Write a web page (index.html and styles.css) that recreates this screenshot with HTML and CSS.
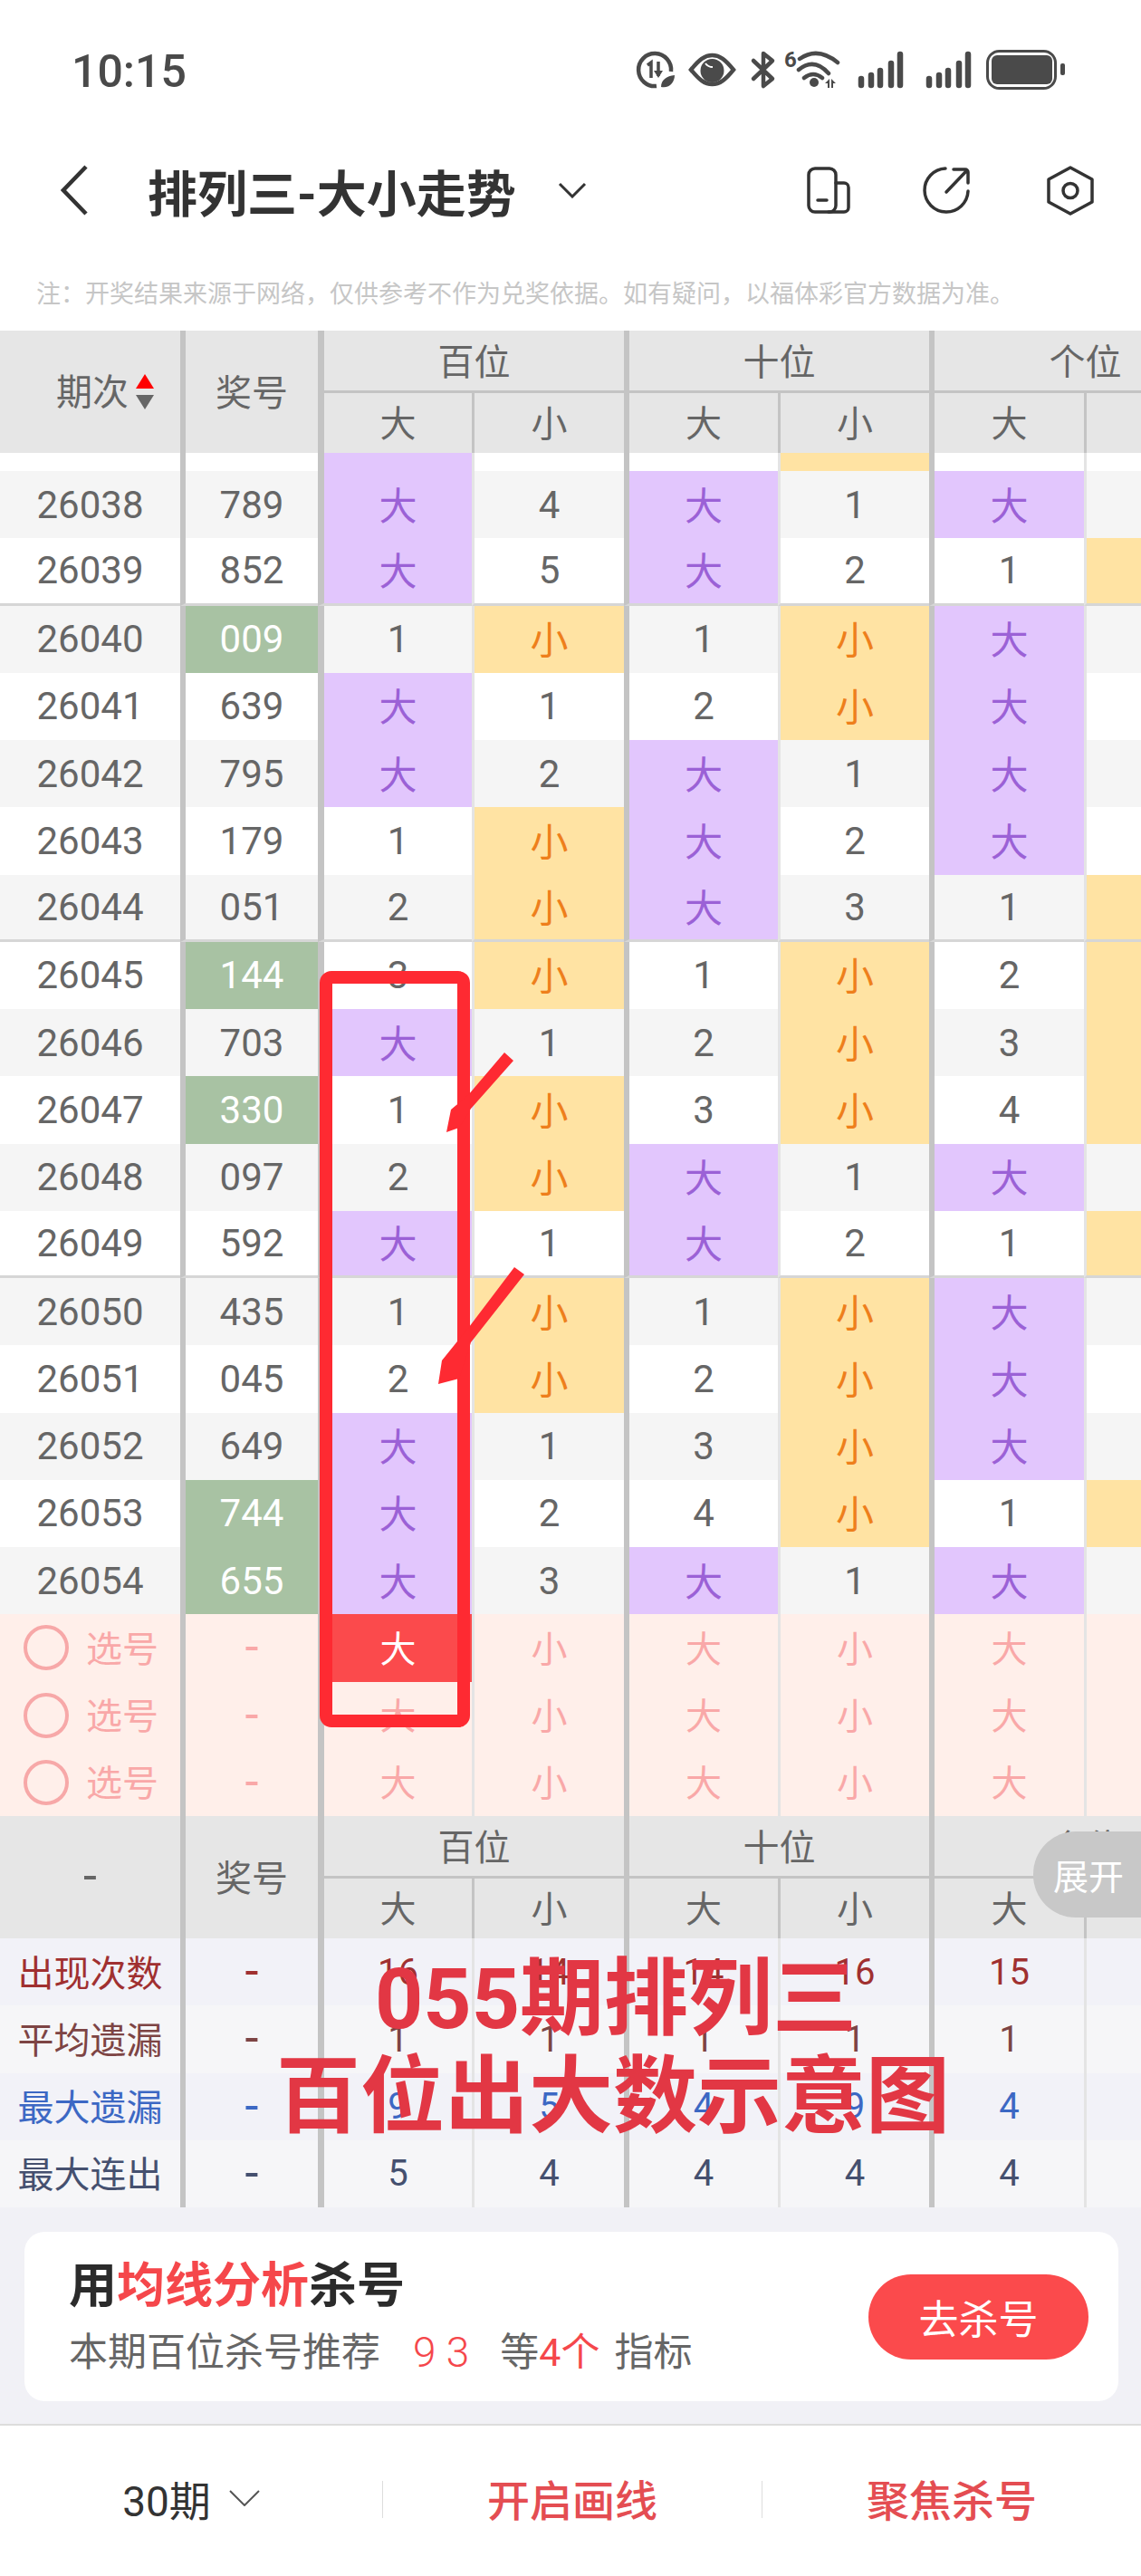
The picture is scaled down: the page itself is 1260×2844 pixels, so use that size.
FILE: index.html
```html
<!DOCTYPE html>
<html lang="zh-CN">
<head>
<meta charset="UTF-8">
<title>排列三-大小走势</title>
<link rel="stylesheet" href="styles.css">
</head>
<body>
<div class="page">

  <div class="status">
    <span class="time">10:15</span>
    <svg class="status-icons" width="480" height="50" viewBox="0 0 480 50">
      <g fill="none" stroke="#4a4a4a" stroke-width="4.5">
        <path d="M25 41A18 18 0 1 1 41 25"/>
        <path d="M15 18l4-3v17" stroke-width="3.5"/>
        <path d="M27 14v16" stroke-width="3.5"/>
        <path d="M63 23C72 12 78 7 86.5 7S101 12 110 23C101 34 95 39 86.5 39S72 34 63 23Z"/>
        <path d="M132 13L153 33L143 41V5L153 13L132 33" stroke-linejoin="round" stroke-linecap="round"/>
        <path d="M183 11Q203 -3 225 15M182 23Q199 9 215 27M188 32Q198 24 208 32" stroke-linecap="round"/>
      </g>
      <g fill="#4a4a4a">
        <path d="M22 24h10l-5 8z"/>
        <path d="M30 42C30 34 36 30 45 29C45 37 39 44 30 42Z"/>
        <circle cx="86.5" cy="24" r="13"/>
        <circle cx="199" cy="37" r="5"/>
        <path d="M211 38l5-5v10h-2v-5zM218 33l5 5h-3v5h-2z"/>
        <text x="166" y="20" class="wifi-num">6</text>
        <rect x="395" y="7" width="67" height="32" rx="6"/>
        <rect x="471" y="16" width="5" height="13" rx="2"/>
      </g>
      <path d="M79 16Q82 20 87 20" fill="none" stroke="#fff" stroke-width="2"/>
      <rect x="390.5" y="2.5" width="75" height="41" rx="13" fill="none" stroke="#4a4a4a" stroke-width="3"/>
      <path d="M251 33v7M262 29v11M272 24v16M284 16v24M294 6v34M326 33v7M337 29v11M347 24v16M359 16v24M369 6v34" stroke="#4a4a4a" stroke-width="6.5" stroke-linecap="round"/>
    </svg>
  </div>

  <div class="nav">
    <svg class="back" width="30" height="56" viewBox="0 0 30 56"><path d="M28 2L3 28L28 54" fill="none" stroke="#333" stroke-width="4.5"/></svg>
    <h1 class="title">排列三-大小走势</h1>
    <svg class="drop" width="32" height="18" viewBox="0 0 32 18"><path d="M2 2L16 16L30 2" fill="none" stroke="#333" stroke-width="3"/></svg>
    <div class="nav-icons">
      <svg width="60" height="60" viewBox="0 0 60 60" fill="none" stroke="#333" stroke-width="3.5" stroke-linecap="round">
        <rect x="6" y="6" width="30" height="48" rx="7"/>
        <path d="M36 22h9a5 5 0 0 1 5 5v22a5 5 0 0 1-5 5H28M16 41h10"/>
      </svg>
      <svg class="share" width="60" height="60" viewBox="0 0 60 60" fill="none" stroke="#333" stroke-width="3.5" stroke-linecap="round">
        <path d="M29 6A24 24 0 1 0 54 31"/>
        <path d="M30 32L52 9M38 7h13a3 3 0 0 1 3 3v12"/>
      </svg>
      <svg class="setting" width="60" height="60" viewBox="0 0 60 60" fill="none" stroke="#333" stroke-width="3.5" stroke-linejoin="round">
        <path d="M30 5L54 18V43L30 56L6 43V18Z"/>
        <circle cx="30" cy="30.5" r="8"/>
      </svg>
    </div>
  </div>

  <p class="note">注：开奖结果来源于网络，仅供参考不作为兑奖依据。如有疑问，以福体彩官方数据为准。</p>

  <div class="table">
    <div class="head">
      <div class="hd span-r issue-hd">期次
        <svg class="sort" width="20" height="40" viewBox="0 0 20 40"><path d="M10 0L20 16H0Z" fill="#f00"/><path d="M0 23H20L10 39Z" fill="#666"/></svg>
      </div>
      <div class="hd span-r">奖号</div>
      <div class="hd span-c top">百位</div>
      <div class="hd span-c top">十位</div>
      <div class="hd span-c top">个位</div>
      <div class="hd a">大</div><div class="hd b">小</div>
      <div class="hd a2">大</div><div class="hd b">小</div>
      <div class="hd a2">大</div><div class="hd b">小</div>
    </div>

    <div class="row cut"><i></i><i></i><i class="big"></i><i></i><i></i><i class="small"></i><i></i><i></i></div>

    <div class="row alt"><i>26038</i><i>789</i><i class="big">大</i><i>4</i><i class="big">大</i><i>1</i><i class="big">大</i><i></i></div>
    <div class="row sep"><i>26039</i><i>852</i><i class="big">大</i><i>5</i><i class="big">大</i><i>2</i><i>1</i><i class="small"></i></div>
    <div class="row alt"><i>26040</i><i class="hit">009</i><i>1</i><i class="small">小</i><i>1</i><i class="small">小</i><i class="big">大</i><i></i></div>
    <div class="row"><i>26041</i><i>639</i><i class="big">大</i><i>1</i><i>2</i><i class="small">小</i><i class="big">大</i><i></i></div>
    <div class="row alt"><i>26042</i><i>795</i><i class="big">大</i><i>2</i><i class="big">大</i><i>1</i><i class="big">大</i><i></i></div>
    <div class="row"><i>26043</i><i>179</i><i>1</i><i class="small">小</i><i class="big">大</i><i>2</i><i class="big">大</i><i></i></div>
    <div class="row alt sep"><i>26044</i><i>051</i><i>2</i><i class="small">小</i><i class="big">大</i><i>3</i><i>1</i><i class="small"></i></div>
    <div class="row"><i>26045</i><i class="hit">144</i><i>3</i><i class="small">小</i><i>1</i><i class="small">小</i><i>2</i><i class="small"></i></div>
    <div class="row alt"><i>26046</i><i>703</i><i class="big">大</i><i>1</i><i>2</i><i class="small">小</i><i>3</i><i class="small"></i></div>
    <div class="row"><i>26047</i><i class="hit">330</i><i>1</i><i class="small">小</i><i>3</i><i class="small">小</i><i>4</i><i class="small"></i></div>
    <div class="row alt"><i>26048</i><i>097</i><i>2</i><i class="small">小</i><i class="big">大</i><i>1</i><i class="big">大</i><i></i></div>
    <div class="row sep"><i>26049</i><i>592</i><i class="big">大</i><i>1</i><i class="big">大</i><i>2</i><i>1</i><i class="small"></i></div>
    <div class="row alt"><i>26050</i><i>435</i><i>1</i><i class="small">小</i><i>1</i><i class="small">小</i><i class="big">大</i><i></i></div>
    <div class="row"><i>26051</i><i>045</i><i>2</i><i class="small">小</i><i>2</i><i class="small">小</i><i class="big">大</i><i></i></div>
    <div class="row alt"><i>26052</i><i>649</i><i class="big">大</i><i>1</i><i>3</i><i class="small">小</i><i class="big">大</i><i></i></div>
    <div class="row"><i>26053</i><i class="hit">744</i><i class="big">大</i><i>2</i><i>4</i><i class="small">小</i><i>1</i><i class="small"></i></div>
    <div class="row alt"><i>26054</i><i class="hit">655</i><i class="big">大</i><i>3</i><i class="big">大</i><i>1</i><i class="big">大</i><i></i></div>

    <div class="row pick"><i><b class="ring"></b>选号</i><i class="dash">-</i><i class="on">大</i><i>小</i><i>大</i><i>小</i><i>大</i><i></i></div>
    <div class="row pick"><i><b class="ring"></b>选号</i><i class="dash">-</i><i>大</i><i>小</i><i>大</i><i>小</i><i>大</i><i></i></div>
    <div class="row pick"><i><b class="ring"></b>选号</i><i class="dash">-</i><i>大</i><i>小</i><i>大</i><i>小</i><i>大</i><i></i></div>

    <div class="head">
      <div class="hd span-r dash">-</div>
      <div class="hd span-r">奖号</div>
      <div class="hd span-c top">百位</div>
      <div class="hd span-c top">十位</div>
      <div class="hd span-c top">个位</div>
      <div class="hd a">大</div><div class="hd b">小</div>
      <div class="hd a2">大</div><div class="hd b">小</div>
      <div class="hd a2">大</div><div class="hd b">小</div>
    </div>

    <div class="row stat s1"><i>出现次数</i><i class="dash">-</i><i>16</i><i>14</i><i>14</i><i>16</i><i>15</i><i></i></div>
    <div class="row stat s2"><i>平均遗漏</i><i class="dash">-</i><i>1</i><i>1</i><i>1</i><i>1</i><i>1</i><i></i></div>
    <div class="row stat s3"><i>最大遗漏</i><i class="dash">-</i><i>9</i><i>5</i><i>4</i><i>9</i><i>4</i><i></i></div>
    <div class="row stat s4"><i>最大连出</i><i class="dash">-</i><i>5</i><i>4</i><i>4</i><i>4</i><i>4</i><i></i></div>
  </div>

  <div class="promo">
    <div class="card">
      <div class="card-text">
        <div class="card-title">用<em>均线分析</em>杀号</div>
        <div class="card-sub">本期百位杀号推荐<em class="nums">9 3</em><span class="deng">等<em>4个</em></span><span class="zhibiao">指标</span></div>
      </div>
      <a class="go" href="#">去杀号</a>
    </div>
  </div>

  <div class="bottom">
    <div class="tab period">30期
      <svg width="34" height="18" viewBox="0 0 34 18"><path d="M1 1L17 17L33 1" fill="none" stroke="#555" stroke-width="2"/></svg>
    </div>
    <div class="tab red">开启画线</div>
    <div class="tab red">聚焦杀号</div>
  </div>

  <!-- 截图上的手工标注 -->
  <svg class="mark" width="1260" height="2844" viewBox="0 0 1260 2844">
    <rect x="360" y="1079" width="152" height="821" rx="6" fill="none" stroke="#fe2a32" stroke-width="14"/>
    <path d="M557 1162L567 1171L520 1224L507 1245L493 1250L498 1225L517 1209Z" fill="#fe2a32"/>
    <path d="M568 1399L579 1407L520 1482L507 1522L484 1528L488 1502L518 1465Z" fill="#fe2a32"/>
  </svg>
  <div class="caption"><span>055期排列三</span><span class="line2">百位出大数示意图</span></div>
  <div class="expand">展开</div>

</div>
</body>
</html>
```

FILE: styles.css
```css
* {
    box-sizing: border-box;
}
body {
    margin: 0;
    background: #fff;
    font-family: Roboto, "Noto Sans CJK SC", sans-serif;
    color: #666;
}
.page {
    position: relative;
    width: 1260px;
    height: 2844px;
    overflow: hidden;
}

/* status bar */
.status {
    height: 158px;
    display: flex;
    align-items: center;
    padding-left: 79px;
}
.time {
    font-size: 50px;
    font-weight: 500;
    color: #4a4a4a;
}
.status-icons {
    margin-left: auto;
    margin-right: 80px;
}
.wifi-num {
    font-size: 24px;
    font-weight: 700;
}

/* nav */
.nav {
    height: 104px;
    display: flex;
    align-items: center;
    padding-left: 67px;
}
.title {
    margin: 0 0 0 66px;
    font-size: 55px;
    font-weight: 700;
    color: #333;
    white-space: nowrap;
}
.drop {
    margin-left: 46px;
}
.nav-icons {
    margin-left: auto;
    margin-right: 48px;
    display: flex;
}
.share {
    margin-left: 68px;
}
.setting {
    margin-left: 77px;
}
.note {
    margin: 0;
    height: 103px;
    padding: 45px 0 0 40px;
    font-size: 27px;
    line-height: 36px;
    color: #c6c6c6;
    white-space: nowrap;
}

/* table */
.table {
    width: 1365px;
    font-size: 42px;
}
.head,
.row {
    display: grid;
    grid-template-columns: 199px 152px 170px 168px 170px 167px 171px 168px;
}
.head {
    height: 135px;
    grid-template-rows: 69px 66px;
    background: #e6e6e6;
    font-size: 40px;
}
.hd {
    display: flex;
    align-items: center;
    justify-content: center;
    padding-bottom: 4px;
    border-left: 0 solid #c4c4c4;
}
.span-r {
    grid-row: span 2;
}
.span-c {
    grid-column: span 2;
}
.head .span-r:nth-child(2) {
    border-left-width: 6px;
}
.head .top {
    border-left-width: 6px;
    border-bottom: 3px solid #c4c4c4;
    padding-bottom: 2px;
}
.head .top:nth-child(3) {
    border-left-width: 7px;
}
.head .a {
    border-left-width: 7px;
}
.head .a2 {
    border-left-width: 6px;
}
.head .b {
    border-left-width: 3px;
}
.issue-hd {
    justify-content: flex-start;
    padding-left: 62px;
    padding-bottom: 5px;
}
.sort {
    margin: 5px 0 0 8px;
    flex: none;
}

.row {
    height: 74.25px;
    background: #fff;
}
.row.alt {
    background: #f5f5f5;
}
.row.cut {
    height: 20px;
}
.row > i {
    font-style: normal;
    display: flex;
    align-items: center;
    justify-content: center;
    border-left: 0 solid #c4c4c4;
}
.row > i:nth-child(2),
.row > i:nth-child(5),
.row > i:nth-child(7) {
    border-left-width: 6px;
}
.row > i:nth-child(3) {
    border-left-width: 7px;
}
.row > i:nth-child(4),
.row > i:nth-child(6),
.row > i:nth-child(8) {
    border-left-width: 3px;
    border-left-color: #e4e4e4;
}
.row.sep > i {
    border-bottom: 3px solid #d6d6d6;
}
.big {
    padding-bottom: 4px;
    background: #e2c6fd;
    color: #9b61d6;
}
.small {
    padding-bottom: 4px;
    background: #ffe3a3;
    color: #ee7f1c;
}
.hit {
    background: #a8c2a3;
    color: #fff;
}
/* the hyphen runs wider in the original */
.dash {
    font-size: 54px;
}
.row > i.dash {
    padding-bottom: 3px;
}

/* pick rows */
.row.pick {
    background: #ffefea;
    color: #f9a8a8;
    font-size: 40px;
}
.row.pick > i {
    padding-bottom: 3px;
}
.row.pick > i.dash {
    font-size: 54px;
}
.ring {
    width: 50px;
    height: 50px;
    margin: 3px 19px 0 2px;
    border: 4px solid #f7a8a8;
    border-radius: 50%;
}
.row > i.on {
    background: #fb4a4c;
    color: #fff;
}

/* stats */
.row.stat {
    font-size: 40px;
}
.row.stat > i:first-child {
    padding-bottom: 3px;
}
.row.stat > i.dash {
    font-size: 54px;
}
.row.s1, .row.s3 {
    background: #f2f2f8;
}
.row.s2, .row.s4 {
    background: #f6f6f8;
}
.s1 { color: #a03030; }
.s2 { color: #7d4444; }
.s3 { color: #3c68c4; }
.s4 { color: #45506f; }

/* promo card */
.promo {
    height: 241px;
    padding: 27px 25px 0 27px;
    background: #f1f1f6;
    border-bottom: 2px solid #dcdcdc;
}
.card {
    height: 187px;
    display: flex;
    align-items: center;
    justify-content: space-between;
    padding: 0 33px 0 49px;
    background: #fff;
    border-radius: 22px;
}
.card em {
    font-style: normal;
    color: #f5474b;
}
.card-title {
    font-size: 53px;
    font-weight: 700;
    line-height: 70px;
    color: #2b2b2b;
}
.card-sub {
    margin-top: 8px;
    font-size: 43px;
    line-height: 60px;
    color: #666;
    display: flex;
    white-space: nowrap;
}
.card-sub .nums {
    margin-left: 36px;
    font-size: 46px;
    font-weight: 300;
}
.deng {
    margin-left: 34px;
}
.zhibiao {
    margin-left: 16px;
}
.go {
    width: 243px;
    height: 94px;
    display: flex;
    align-items: center;
    justify-content: center;
    background: #fb4a4c;
    border-radius: 47px;
    font-size: 44px;
    color: #fff;
    text-decoration: none;
}

/* bottom bar */
.bottom {
    height: 166px;
    display: flex;
    align-items: center;
    padding-bottom: 4px;
}
.tab {
    width: 419px;
    height: 41px;
    display: flex;
    align-items: center;
    justify-content: center;
    font-size: 47px;
    padding-bottom: 3px;
    border-left: 1px solid #dddddd;
}
.tab.period {
    width: 422px;
    border-left: 0;
    font-size: 46px;
    color: #333;
}
.tab.period svg {
    margin-left: 20px;
}
.tab.red {
    color: #e44d52;
    font-weight: 500;
}

/* annotations laid over the shot */
.mark {
    position: absolute;
    left: 0;
    top: 0;
}
.caption {
    position: absolute;
    left: 0;
    top: 2154px;
    width: 1360px;
    font-size: 93px;
    line-height: 108px;
    font-weight: 700;
    color: #e23744;
    text-align: center;
}
.caption span {
    display: block;
}
.caption .line2 {
    margin-left: -6px;
}
.expand {
    position: absolute;
    right: 0;
    top: 2022px;
    width: 119px;
    height: 95px;
    display: flex;
    align-items: center;
    padding: 0 0 2px 22px;
    background: #c8c8c8;
    border-radius: 47px 0 0 47px;
    font-size: 39px;
    color: #fff;
}
```
